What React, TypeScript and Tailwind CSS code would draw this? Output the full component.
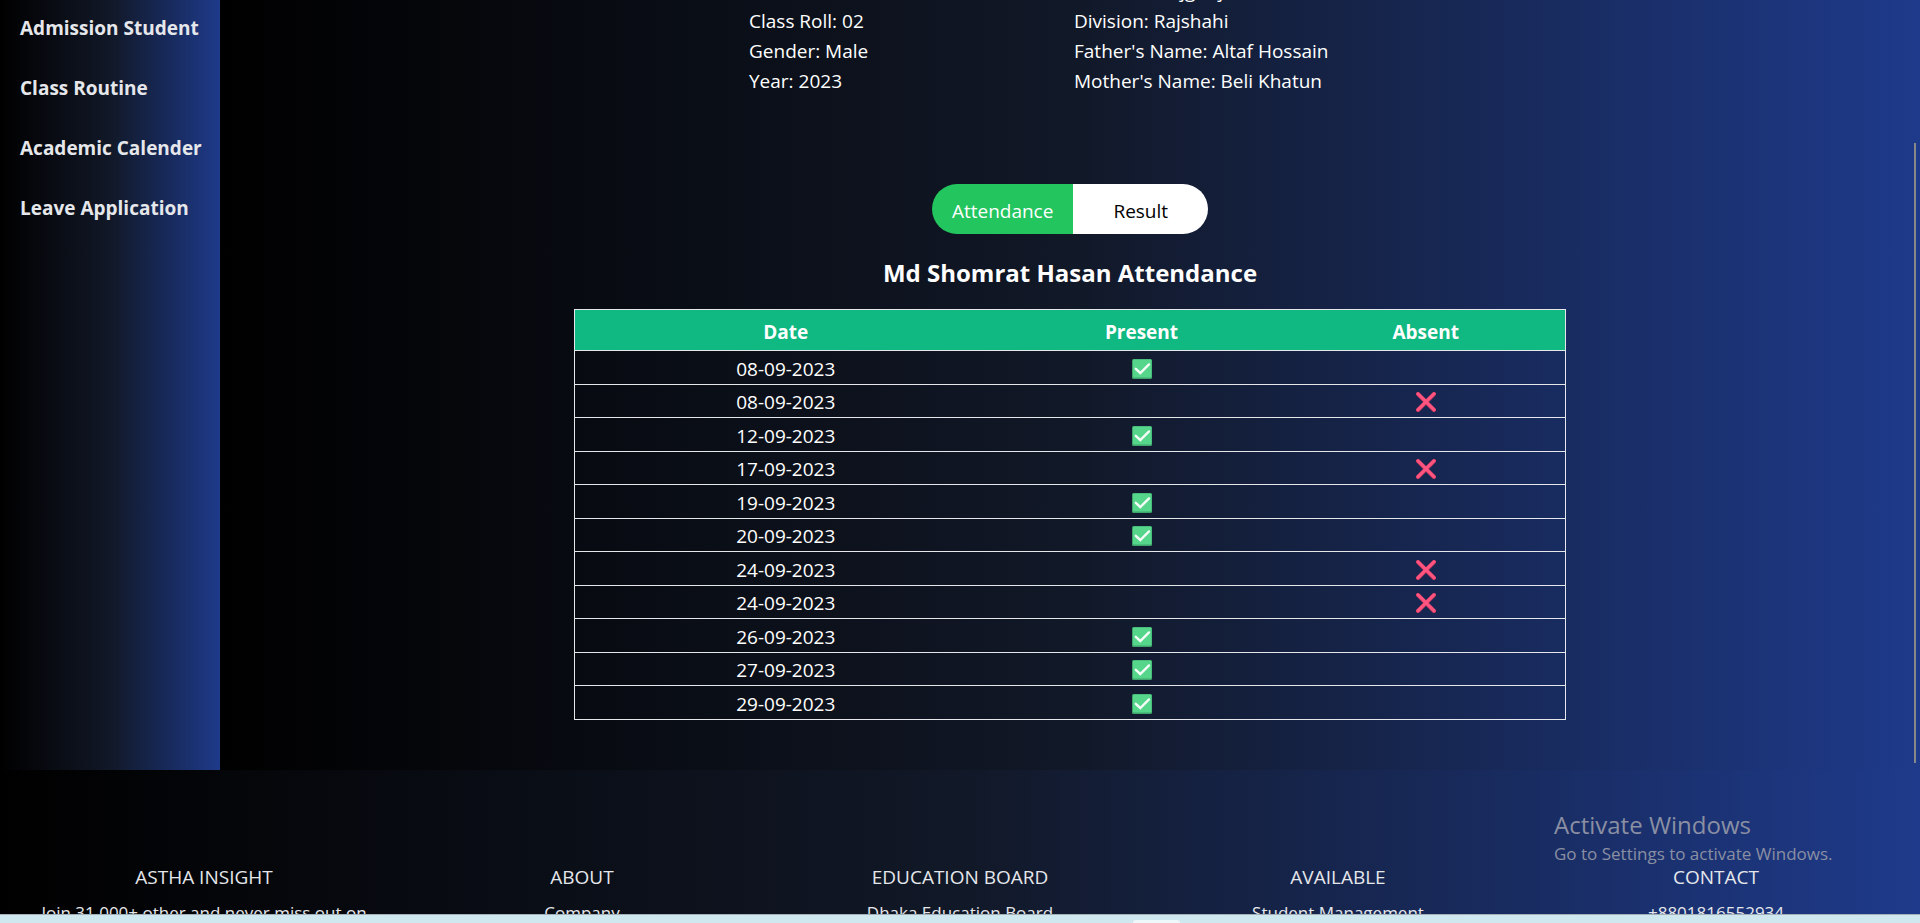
const sidebarLinks = ["Admission Student", "Class Routine", "Academic Calender", "Leave Application"];

const leftDetails = ["Class Roll: 02", "Gender: Male", "Year: 2023"];
const rightDetails = [
  "District: Sirajgonj",
  "Division: Rajshahi",
  "Father's Name: Altaf Hossain",
  "Mother's Name: Beli Khatun",
];

const attendance: { date: string; present: boolean }[] = [
  { date: "08-09-2023", present: true },
  { date: "08-09-2023", present: false },
  { date: "12-09-2023", present: true },
  { date: "17-09-2023", present: false },
  { date: "19-09-2023", present: true },
  { date: "20-09-2023", present: true },
  { date: "24-09-2023", present: false },
  { date: "24-09-2023", present: false },
  { date: "26-09-2023", present: true },
  { date: "27-09-2023", present: true },
  { date: "29-09-2023", present: true },
];

const footerColumns = [
  { title: "ASTHA INSIGHT", text: "Join 31,000+ other and never miss out on" },
  { title: "ABOUT", text: "Company" },
  { title: "EDUCATION BOARD", text: "Dhaka Education Board" },
  { title: "AVAILABLE", text: "Student Management" },
  { title: "CONTACT", text: "+8801816552934" },
];

function CheckMark() {
  return (
    <svg viewBox="0 0 20 20" className="mx-auto block size-5" role="img" aria-label="Present">
      <rect width="20" height="20" rx="1.5" fill="#3fa56c" />
      <rect x="1" y="0.5" width="18.5" height="18" rx="1" fill="#55d68b" />
      <path d="M3.8 9.8 8.3 14 17 5.4" fill="none" stroke="#f5fdf8" strokeWidth="2.4" strokeLinecap="round" />
    </svg>
  );
}

function CrossMark() {
  return (
    <svg viewBox="0 0 20 20" className="mx-auto block size-5" role="img" aria-label="Absent">
      <path d="M2 2 18 18M18 2 2 18" fill="none" stroke="#d63a5e" strokeWidth="4" strokeLinecap="round" />
      <path d="M2 1.8 18 17.6M18 1.8 2 17.6" fill="none" stroke="#ff5580" strokeWidth="3" strokeLinecap="round" />
    </svg>
  );
}

function Details({ lines }: { lines: string[] }) {
  return (
    <ul className="flex-1">
      {lines.map((line) => (
        <li key={line}>{line}</li>
      ))}
    </ul>
  );
}

export default function App() {
  return (
    <div className="relative flex h-screen flex-col overflow-hidden bg-black font-['Open_Sans','Noto_Sans',sans-serif] text-[19px] leading-[30px] text-white">
      <div className="min-h-0 flex-1 overflow-hidden">
        <div className="flex">
          <aside className="w-[220px] shrink-0 bg-[linear-gradient(to_right,#000,#111827,#1e3a8a)] px-5 pt-[13px]">
            <nav className="flex flex-col gap-[30px] font-bold whitespace-nowrap text-gray-200">
              {sidebarLinks.map((label) => (
                <a key={label} href="#">
                  {label}
                </a>
              ))}
            </nav>
          </aside>

          <main className="flex min-w-0 flex-1 flex-col items-center bg-[linear-gradient(to_right,#000,#111827,#1e3a8a)] px-5 pb-[50px]">
            <section className="-mt-6 flex w-[650px] items-end gap-1 pl-1 whitespace-nowrap">
              <Details lines={leftDetails} />
              <Details lines={rightDetails} />
            </section>

            <div className="mt-[88px] flex h-[50px] overflow-hidden rounded-full">
              <button type="button" className="bg-[#22c55e] px-5 pt-[3px]">
                Attendance
              </button>
              <button type="button" className="bg-white px-10 pt-[3px] text-black">
                Result
              </button>
            </div>

            <h2 className="mt-[21px] text-2xl leading-[35px] font-bold">Md Shomrat Hasan Attendance</h2>

            <table className="mt-[19px] w-full max-w-[992px] table-fixed border-collapse border border-gray-200 text-center">
              <colgroup>
                <col className="w-[422px]" />
                <col className="w-[290px]" />
                <col />
              </colgroup>
              <thead>
                <tr className="h-[41px] bg-[#10b981]">
                  <th className="p-0 pt-1">Date</th>
                  <th className="p-0 pt-1">Present</th>
                  <th className="p-0 pt-1">Absent</th>
                </tr>
              </thead>
              <tbody>
                {attendance.map((row, i) => (
                  <tr key={i} className="h-[33px] border-t border-gray-200 odd:h-[34px]">
                    <td className="p-0 pt-[2px]">{row.date}</td>
                    <td className="p-0 pt-[2px]">{row.present && <CheckMark />}</td>
                    <td className="p-0 pt-[2px]">{!row.present && <CrossMark />}</td>
                  </tr>
                ))}
              </tbody>
            </table>
          </main>
        </div>

        <footer className="grid grid-cols-5 gap-[50px] bg-[linear-gradient(to_right,#000,#111827,#1e3a8a)] px-10 pt-[92px] pb-10 text-center whitespace-nowrap text-gray-200">
          {footerColumns.map((column) => (
            <div key={column.title} className="flex flex-col items-center gap-[6px]">
              <h3>{column.title}</h3>
              <p className="text-[17px]">{column.text}</p>
            </div>
          ))}
        </footer>
      </div>

      <div className="flex h-[9px] shrink-0 items-end border-t border-[#a4b0b8] bg-[#cfe8ef] pl-[59%]">
        <div className="h-[3px] w-[47px] rounded-t bg-[#eef7fa]" />
      </div>

      <div className="absolute top-[143px] right-1 h-[620px] w-[2px] bg-[#888888]" />

      <div className="pointer-events-none absolute right-[82px] bottom-[56px] w-[284px] whitespace-nowrap text-[#8a8fa3]">
        <p className="text-2xl leading-[32px]">Activate Windows</p>
        <p className="text-[17px] leading-[26px]">Go to Settings to activate Windows.</p>
      </div>
    </div>
  );
}
